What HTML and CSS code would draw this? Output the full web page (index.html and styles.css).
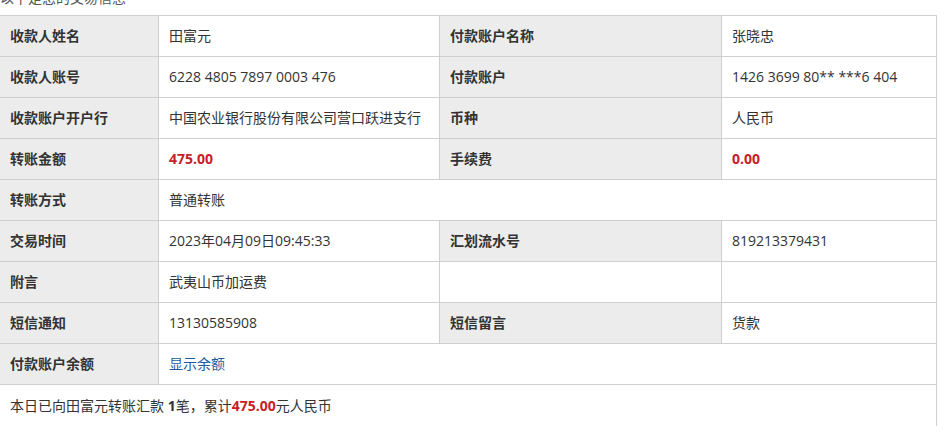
FILE: index.html
```html
<!DOCTYPE html>
<html lang="zh-CN">
<head>
<meta charset="utf-8">
<title>交易信息</title>
<link rel="stylesheet" href="styles.css">
</head>
<body>
<div class="page">
  <div class="intro">以下是您的交易信息</div>
  <div class="grid">
    <div class="cell label">收款人姓名</div>
    <div class="cell">田富元</div>
    <div class="cell label">付款账户名称</div>
    <div class="cell">张晓忠</div>

    <div class="cell label">收款人账号</div>
    <div class="cell">6228 4805 7897 0003 476</div>
    <div class="cell label">付款账户</div>
    <div class="cell">1426 3699 80** ***6 404</div>

    <div class="cell label">收款账户开户行</div>
    <div class="cell">中国农业银行股份有限公司营口跃进支行</div>
    <div class="cell label">币种</div>
    <div class="cell">人民币</div>

    <div class="cell label">转账金额</div>
    <div class="cell amount">475.00</div>
    <div class="cell label">手续费</div>
    <div class="cell amount">0.00</div>

    <div class="cell label">转账方式</div>
    <div class="cell span3">普通转账</div>

    <div class="cell label">交易时间</div>
    <div class="cell">2023年04月09日09:45:33</div>
    <div class="cell label">汇划流水号</div>
    <div class="cell">819213379431</div>

    <div class="cell label">附言</div>
    <div class="cell">武夷山币加运费</div>
    <div class="cell"></div>
    <div class="cell"></div>

    <div class="cell label">短信通知</div>
    <div class="cell">13130585908</div>
    <div class="cell label">短信留言</div>
    <div class="cell">货款</div>

    <div class="cell label">付款账户余额</div>
    <div class="cell span3"><a class="link" href="#">显示余额</a></div>

    <div class="cell span4 summary">本日已向田富元转账汇款&nbsp;<b>1</b>笔，累计<b class="red">475.00</b>元人民币</div>
  </div>
</div>
</body>
</html>
```

FILE: styles.css
```css
html, body {
  margin: 0;
  padding: 0;
  background: #ffffff;
}

body {
  font-family: "Open Sans", "Noto Sans CJK SC", sans-serif;
  font-size: 14px;
  color: #333333;
  overflow: hidden;
}

.page {
  width: 945px;
}

.intro {
  margin-top: -12px;
  height: 20px;
  line-height: 20px;
  margin-bottom: 7px;
  color: #555555;
}

.grid {
  display: grid;
  grid-template-columns: 158px 280px 281px 214px;
  grid-auto-rows: 40px;
  gap: 1px;
  padding: 1px 1px 1px 0;
  width: 936px;
  background: #cfcfcf;
}

.cell {
  background: #ffffff;
  display: flex;
  align-items: center;
  padding: 0 10px;
  white-space: nowrap;
  line-height: 20px;
}

.label {
  background: #ececec;
  font-weight: bold;
  color: #333333;
}

.amount {
  color: #c8202a;
  font-weight: bold;
}

.span3 {
  grid-column: span 3;
}

.span4 {
  grid-column: span 4;
}

.summary {
  height: 41px;
}

.summary b {
  font-weight: bold;
}

.summary .red {
  color: #c8202a;
}

.link {
  color: #1d5b9c;
  text-decoration: none;
}
```
